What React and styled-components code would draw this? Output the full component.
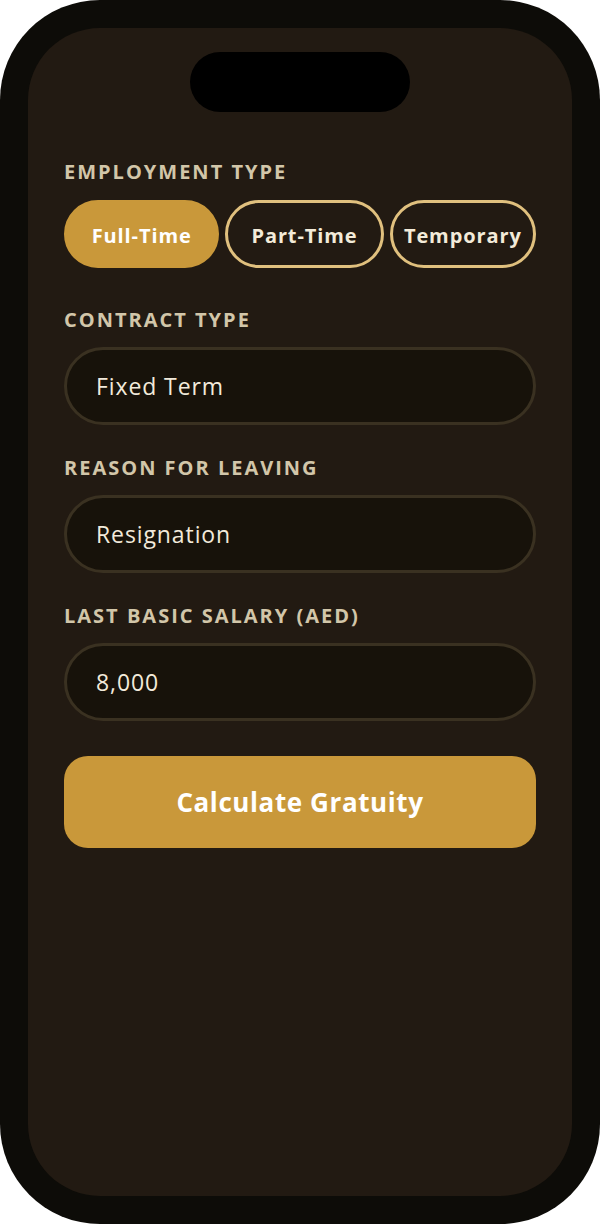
import styled, { createGlobalStyle } from 'styled-components';
import { useState } from 'react';

const GlobalStyle = createGlobalStyle`
  html, body {
    margin: 0;
    padding: 0;
    background: #ffffff;
  }
  * {
    box-sizing: border-box;
  }
`;

const Phone = styled.div`
  width: 600px;
  height: 1224px;
  border-radius: 100px;
  background: #0d0c08;
  padding: 28px;
  font-family: 'Open Sans', 'DejaVu Sans', sans-serif;
`;

const Screen = styled.div`
  height: 100%;
  border-radius: 72px;
  background: #221a12;
  padding: 24px 36px 0;
  display: flex;
  flex-direction: column;
`;

const Island = styled.div`
  width: 220px;
  height: 60px;
  border-radius: 30px;
  background: #000;
  align-self: center;
  margin-bottom: 48px;
`;

const Form = styled.div`
  display: flex;
  flex-direction: column;
`;

const Field = styled.div`
  display: flex;
  flex-direction: column;
  margin-bottom: ${(p) => p.$after || 31}px;
`;

const Label = styled.div`
  font-size: 20px;
  line-height: 24px;
  font-weight: 700;
  letter-spacing: 2px;
  text-transform: uppercase;
  color: #d2c6a9;
  margin-bottom: ${(p) => p.$gap || 15}px;
`;

const PillRow = styled.div`
  display: flex;
  gap: 6px;
`;

const Pill = styled.button`
  height: 68px;
  width: ${(p) => p.$width}px;
  padding: 3px 0 0;
  border-radius: 34px;
  border: 3px solid ${(p) => (p.$active ? '#c9983a' : '#e0c07e')};
  background: ${(p) => (p.$active ? '#c9983a' : 'transparent')};
  color: ${(p) => (p.$active ? '#ffffff' : '#f3ebd9')};
  font-family: inherit;
  font-size: 20px;
  font-weight: 700;
  letter-spacing: 0.9px;
  white-space: nowrap;
  cursor: pointer;
`;

const Input = styled.input`
  height: 78px;
  width: 100%;
  border-radius: 39px;
  border: 3px solid #3a3121;
  background: #17120a;
  color: #f2eadb;
  font-family: inherit;
  font-size: 23px;
  letter-spacing: 0.9px;
  padding: 0 29px;

  &:focus {
    outline: none;
  }
`;

const Submit = styled.button`
  margin-top: 4px;
  height: 92px;
  width: 100%;
  border: none;
  border-radius: 24px;
  background: #c9983a;
  color: #ffffff;
  font-family: inherit;
  font-size: 26px;
  font-weight: 700;
  letter-spacing: 0.6px;
  cursor: pointer;
`;

const types = [
  { name: 'Full-Time', width: 156 },
  { name: 'Part-Time', width: 159 },
  { name: 'Temporary', width: 147 },
];

const App = () => {
  const [type, setType] = useState('Full-Time');
  const [contract, setContract] = useState('Fixed Term');
  const [reason, setReason] = useState('Resignation');
  const [salary, setSalary] = useState('8,000');

  return (
    <>
      <GlobalStyle />
      <Phone>
        <Screen>
          <Island />
          <Form>
            <Field $after={40}>
              <Label $gap={16}>Employment Type</Label>
              <PillRow>
                {types.map((t) => (
                  <Pill
                    key={t.name}
                    $width={t.width}
                    $active={type === t.name}
                    onClick={() => setType(t.name)}
                  >
                    {t.name}
                  </Pill>
                ))}
              </PillRow>
            </Field>

            <Field>
              <Label>Contract Type</Label>
              <Input value={contract} onChange={(e) => setContract(e.target.value)} />
            </Field>

            <Field>
              <Label>Reason for Leaving</Label>
              <Input value={reason} onChange={(e) => setReason(e.target.value)} />
            </Field>

            <Field $after={31}>
              <Label>Last Basic Salary (AED)</Label>
              <Input value={salary} onChange={(e) => setSalary(e.target.value)} />
            </Field>

            <Submit>Calculate Gratuity</Submit>
          </Form>
        </Screen>
      </Phone>
    </>
  );
};

export default App;
